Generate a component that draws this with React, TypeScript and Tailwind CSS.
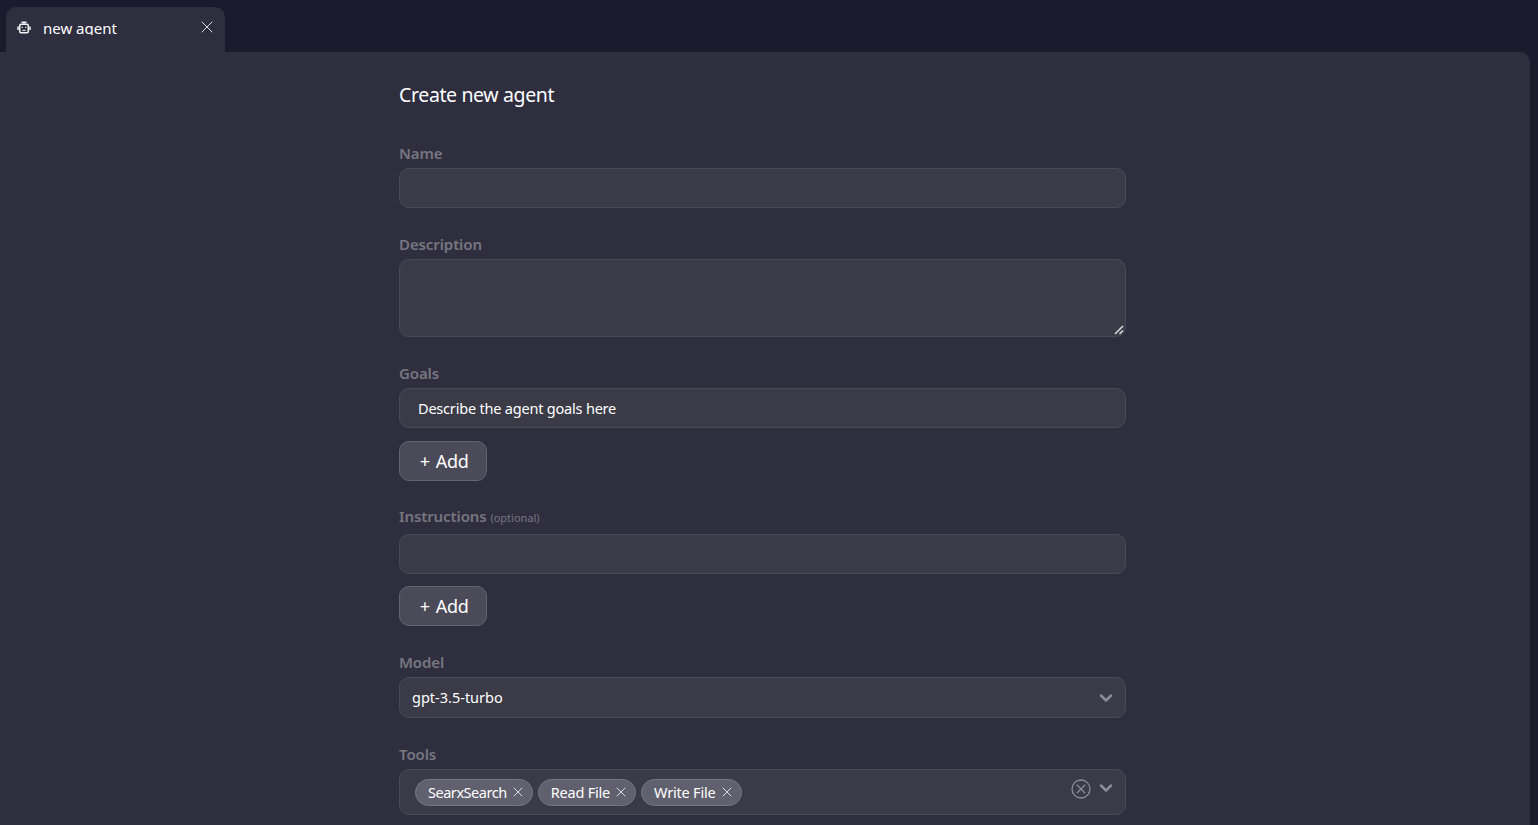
import { X, ChevronDown } from 'lucide-react'

const FONT = 'font-["Noto_Sans",sans-serif]'
const fieldClass =
  'block w-full rounded-[10px] border border-[#4a4a57] bg-[#3b3b47] text-[14.5px] tracking-[-0.2px] text-white outline-none'
const labelClass = 'block h-[21px] text-[15px] leading-[21px] font-semibold tracking-[-0.1px] text-[#777680]'

function FieldLabel({ children }: { children: React.ReactNode }) {
  return <label className={`${labelClass} mb-1`}>{children}</label>
}

function AddButton({ className = '' }: { className?: string }) {
  return (
    <button className={`block h-10 w-[88px] rounded-[10px] border border-[#64636f] bg-[#4b4a58] pl-[2px] text-[18px] tracking-[-0.4px] [word-spacing:2px] text-white ${className}`}>
      + Add
    </button>
  )
}

function ToolTag({ label, className = '' }: { label: string; className?: string }) {
  return (
    <span className={`flex h-[27px] items-center gap-[3px] rounded-full border border-[#777682] bg-[#61606e] pl-[12px] pr-[6px] text-white ${className}`}>
      <span className="pt-px">{label}</span>
      <X size={16} strokeWidth={1.4} className="text-[#e4e4e8]" />
    </span>
  )
}

function RobotIcon() {
  return (
    <svg width="14" height="14" viewBox="0 0 14 14" fill="none" stroke="#f2f2f4" strokeWidth="1.5">
      <rect x="2.75" y="3.25" width="8.5" height="8.5" rx="1.2" />
      <path d="M7 1v2M4.5 1.2h5" />
      <path d="M1 5.5v3.5M13 5.5v3.5" />
      <path d="M4.6 6.3h1.4M8 6.3h1.4M5.2 9.3h3.6" strokeWidth="1" />
    </svg>
  )
}

function ClearIcon() {
  return (
    <svg width="20" height="20" viewBox="0 0 20 20" fill="none" stroke="#8c8c96" strokeWidth="1.3" className="mb-[6px] ml-auto">
      <circle cx="10" cy="10" r="9" />
      <path d="M5.8 5.8l8.4 8.4M14.2 5.8l-8.4 8.4" />
    </svg>
  )
}

export default function App() {
  return (
    <div className={`flex h-screen flex-col overflow-hidden bg-[#1c1b2e] ${FONT}`}>
      <div className="flex h-[52px] shrink-0 items-end pl-1.5">
        <div className="flex h-[45px] w-[219px] items-start rounded-t-[10px] bg-[#2f2e3f] pl-[11px] pr-2 pt-[11px]">
          <div className="mt-[3px]">
            <RobotIcon />
          </div>
          <span className="ml-3 h-[17px] overflow-hidden text-[15px] leading-[20px] text-white">new agent</span>
          <X size={20} strokeWidth={1.1} className="ml-auto -mt-[1px] text-[#e8e8ec]" />
        </div>
      </div>
      <main className="mr-2 flex-1 rounded-tr-[10px] bg-[#2f2e3f] pl-[399px]">
        <div className="w-[727px]">
          <h1 className="mt-[29px] h-[28px] text-[19.5px] leading-[28px] tracking-[-0.37px] text-white">Create new agent</h1>

          <section className="mt-[34px]">
            <FieldLabel>Name</FieldLabel>
            <input className={`${fieldClass} h-10`} />
          </section>

          <section className="mt-[26px]">
            <FieldLabel>Description</FieldLabel>
            <div className="relative">
              <textarea className={`${fieldClass} h-[78px] resize-none`} />
              <svg width="10" height="10" viewBox="0 0 10 10" className="pointer-events-none absolute bottom-[2px] right-[2px]">
                <path d="M1 9 9 1M5.5 9 9 5.5" stroke="#d8d8dc" strokeWidth="1.6" />
              </svg>
            </div>
          </section>

          <section className="mt-[26px]">
            <FieldLabel>Goals</FieldLabel>
            <input className={`${fieldClass} h-10 pl-[18px]`} defaultValue="Describe the agent goals here" />
            <AddButton className="mt-[13px]" />
          </section>

          <section className="mt-[25px]">
            <label className={`${labelClass} mb-[7px]`}>
              Instructions <span className="text-[11px] font-normal tracking-normal">(optional)</span>
            </label>
            <input className={`${fieldClass} h-10`} />
            <AddButton className="mt-3" />
          </section>

          <section className="mt-[26px]">
            <FieldLabel>Model</FieldLabel>
            <div className={`${fieldClass} flex h-[41px] items-center pl-[12px] pr-[9px] tracking-normal`}>
              gpt-3.5-turbo
              <ChevronDown size={20} strokeWidth={3} className="ml-auto text-[#8c8c96]" />
            </div>
          </section>

          <section className="mt-[26px]">
            <FieldLabel>Tools</FieldLabel>
            <div className={`${fieldClass} flex h-[46px] items-center gap-[5px] pl-[15px] pr-[9px]`}>
              <ToolTag label="SearxSearch" className="tracking-[-0.47px]" />
              <ToolTag label="Read File" />
              <ToolTag label="Write File" />
              <ClearIcon />
              <ChevronDown size={20} strokeWidth={3} className="mb-2 text-[#8c8c96]" />
            </div>
          </section>
        </div>
      </main>
    </div>
  )
}
